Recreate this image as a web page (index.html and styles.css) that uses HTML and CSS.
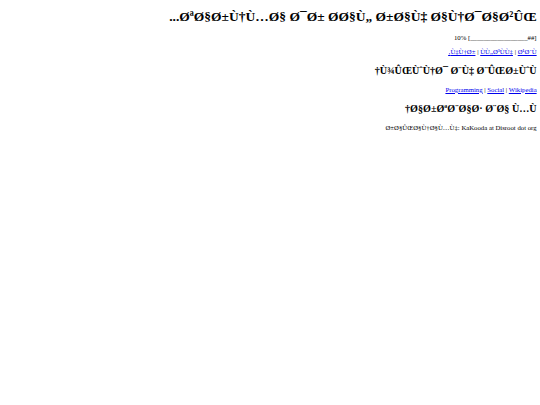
FILE: index.html
```html
<!DOCTYPE html>
<html dir="rtl">
<head>
<meta charset="utf-8">
<title>KaKooda</title>
<link rel="stylesheet" href="styles.css">
</head>
<body class="page">
<h1 class="title">ØªØ§Ø±Ù†Ù…Ø§ Ø¯Ø± Ø&#173;Ø§Ù„ Ø±Ø§Ù‡ Ø§Ù†Ø¯Ø§Ø²ÛŒ...</h1>
<p class="line">[##_________________] 10%</p>
<p class="line"><a class="link" href="#">Ù‡Ù†Ø±</a> | <a class="link" href="#">ÙÙ„Ø³ÙÙ‡</a> | <a class="link" href="#">Ø¹Ø´Ù‚</a></p>
<h2 class="heading">Ù¾ÛŒÙˆÙ†Ø¯ Ø¨Ù‡ Ø¨ÛŒØ±ÙˆÙ†</h2>
<p class="line"><a class="link" href="#">Programming</a> | <a class="link" href="#">Social</a> | <a class="link" href="#">Wikipedia</a></p>
<h2 class="heading">Ø§Ø±ØªØ¨Ø§Ø· Ø¨Ø§ Ù…Ù†</h2>
<p class="line">Ø±Ø§ÛŒØ§Ù†Ø§Ù…Ù‡: KaKooda at Disroot dot org</p>
</body>
</html>
```

FILE: styles.css
```css
.page {
  margin: 3.375px;
  font-family: "Liberation Serif", "Times New Roman", serif;
  font-size: 6.75px;
  line-height: 7.17px;
  color: #000;
  background: #fff;
}
.title {
  font-size: 13.5px;
  line-height: 15.19px;
  font-weight: bold;
  margin: 6px 0 9.045px;
}
.heading {
  font-size: 10.125px;
  line-height: 10.97px;
  font-weight: bold;
  margin: 11px 0 8.8px;
}
.line {
  margin: 7.2px 0;
}
.link {
  color: #0000ee;
  text-decoration: underline;
}
```
